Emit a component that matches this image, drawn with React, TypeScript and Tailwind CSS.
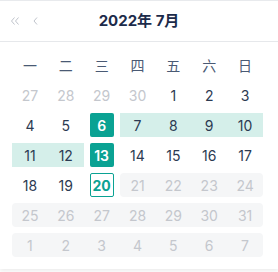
import React from "react"

type Day = {
  n: number
  muted?: boolean // other month
  disabled?: boolean
  selected?: boolean
  today?: boolean
  range?: boolean
  first?: boolean // first cell of a disabled strip
  last?: boolean
}

const weekdays = ["一", "二", "三", "四", "五", "六", "日"]

const rows: Day[][] = [
  [{ n: 27, muted: true }, { n: 28, muted: true }, { n: 29, muted: true }, { n: 30, muted: true }, { n: 1 }, { n: 2 }, { n: 3 }],
  [{ n: 4 }, { n: 5 }, { n: 6, selected: true }, { n: 7, range: true }, { n: 8, range: true }, { n: 9, range: true }, { n: 10, range: true }],
  [{ n: 11, range: true }, { n: 12, range: true }, { n: 13, selected: true }, { n: 14 }, { n: 15 }, { n: 16 }, { n: 17 }],
  [{ n: 18 }, { n: 19 }, { n: 20, today: true }, { n: 21, disabled: true, first: true }, { n: 22, disabled: true }, { n: 23, disabled: true }, { n: 24, disabled: true, last: true }],
  [25, 26, 27, 28, 29, 30, 31].map((n, i) => ({ n, disabled: true, first: i === 0, last: i === 6 })),
  [1, 2, 3, 4, 5, 6, 7].map((n, i) => ({ n, disabled: true, first: i === 0, last: i === 6 })),
]

function Cell({ d }: { d: Day }) {
  if (d.selected) {
    return (
      <div className="flex h-[30px] items-center justify-center">
        <span className="flex h-[24px] w-[24px] items-center justify-center rounded-[2px] bg-[#0aa293] font-semibold text-white">
          {d.n}
        </span>
      </div>
    )
  }
  if (d.today) {
    return (
      <div className="flex h-[30px] items-center justify-center">
        <span className="flex h-[24px] w-[24px] items-center justify-center rounded-[2px] border border-[#0aa293] font-bold text-[#0aa293]">
          {d.n}
        </span>
      </div>
    )
  }
  if (d.range) {
    return (
      <div className="flex h-[30px] items-center">
        <span className="flex h-[24px] w-full items-center justify-center bg-[#d5efea] text-[#2c3a52]">{d.n}</span>
      </div>
    )
  }
  if (d.disabled) {
    return (
      <div className="flex h-[30px] items-center">
        <span
          className={`flex h-[24px] w-full items-center justify-center bg-[#f5f6f7] text-[#c4c7cd] ${d.first ? "rounded-l-[4px]" : ""} ${d.last ? "rounded-r-[4px]" : ""}`}
        >
          {d.n}
        </span>
      </div>
    )
  }
  return (
    <div className={`flex h-[30px] items-center justify-center ${d.muted ? "text-[#c4c7cd]" : "text-[#2c3a52]"}`}>
      {d.n}
    </div>
  )
}

export default function App() {
  return (
    <div
      className="h-[272px] w-[278px] overflow-hidden bg-white"
      style={{ fontFamily: 'Inter, "Noto Sans CJK SC", sans-serif' }}
    >
      <div className="h-[269px] w-[278px] border-t border-[#e8eaed] bg-white shadow-[0_2px_4px_rgba(0,0,0,0.08)]">
        {/* Header */}
        <div className="relative flex h-[41px] items-center justify-center border-b border-[#e6e8eb]">
          <div className="absolute left-[10px] top-[15px] flex items-center gap-[13px]">
            <svg width="10" height="10" viewBox="0 0 10 10" fill="none" stroke="#c0c4cc" strokeWidth="1">
              <path d="M4.5 1.5 L1.5 5 L4.5 8.5" />
              <path d="M8.5 1.5 L5.5 5 L8.5 8.5" />
            </svg>
            <svg width="6" height="10" viewBox="0 0 6 10" fill="none" stroke="#c0c4cc" strokeWidth="1">
              <path d="M4 1.5 L1 5 L4 8.5" />
            </svg>
          </div>
          <span className="text-[15px] font-bold text-[#1c2b4a]">2022年 7月</span>
        </div>

        {/* Body */}
        <div className="ml-[12px] w-[251px] pt-[8px] text-[14px]">
          <div className="grid grid-cols-7">
            {weekdays.map((w) => (
              <div key={w} className="flex h-[30px] items-center justify-center text-[#4a5a74]">
                {w}
              </div>
            ))}
          </div>
          {rows.map((r, i) => (
            <div key={i} className="grid grid-cols-7">
              {r.map((d, j) => (
                <Cell key={j} d={d} />
              ))}
            </div>
          ))}
        </div>
      </div>
    </div>
  )
}
